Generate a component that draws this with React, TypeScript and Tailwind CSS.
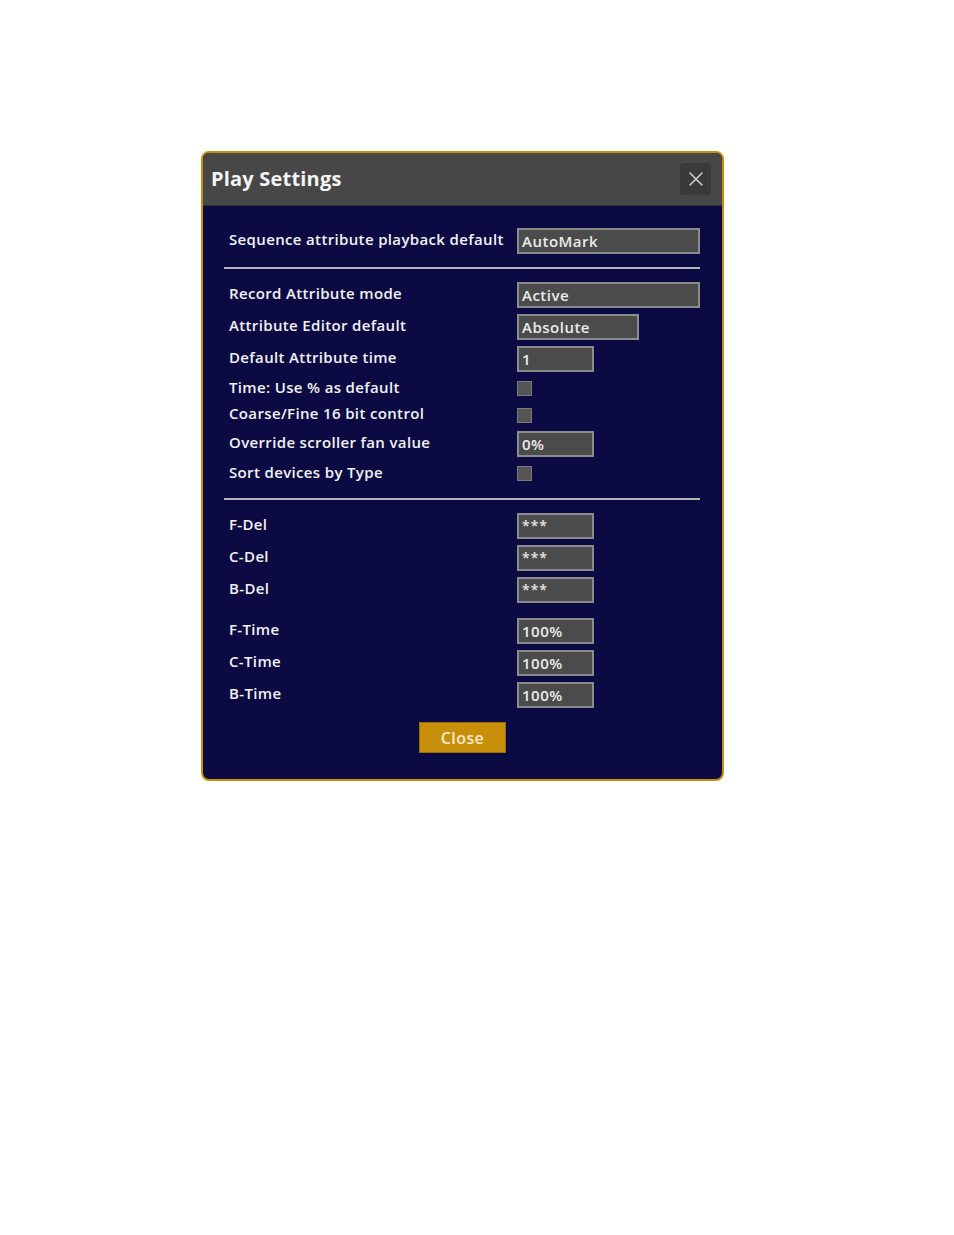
const label = "text-[15px] font-semibold tracking-[0.35px] text-[#f2f2f2]";
const fieldText = "text-[15px] font-semibold tracking-[0.5px] text-[#ececec]";

function Field({ value, width, stars }: { value: string; width: string; stars?: boolean }) {
  return (
    <div
      className={`h-[26px] ${width} border-2 border-[#8c8c8c] bg-[#4b4b4b] flex px-[3px] ${stars ? "items-start pt-[4px]" : "items-center"}`}
    >
      <span className={stars ? "text-[14px] font-bold tracking-[1px] text-[#d8d8d8] leading-none" : fieldText}>{value}</span>
    </div>
  );
}

function Check() {
  return <div className="w-[15px] h-[15px] border border-[#7a7a7a] bg-[#555555]" />;
}

function Row({ text, h, children }: { text: string; h: string; children: React.ReactNode }) {
  return (
    <div className={`flex items-center ${h}`}>
      <div className={`w-[288px] ${label} -mt-[3px]`}>{text}</div>
      {children}
    </div>
  );
}

export default function App() {
  return (
    <div className="min-h-[1235px] bg-white pt-[151px] pl-[201px]" style={{ fontFamily: '"Open Sans", "DejaVu Sans", sans-serif' }}>
      <div className="w-[523px] rounded-[8px] border-2 border-[#c8900a] overflow-hidden bg-[#0b0a42]">
        <div className="h-[53px] bg-[#474747] border-b border-[#333] flex items-center justify-between pl-[8px] pr-[11px]">
          <h1 className="text-[20px] font-bold text-[#f4f4f4] tracking-[0.2px] -mt-[1px]">Play Settings</h1>
          <button className="w-[31px] h-[32px] rounded-[4px] bg-[#3a3a3a] flex items-center justify-center">
            <svg width="16" height="16" viewBox="0 0 16 16" stroke="#d0d0d0" strokeWidth="1.5" strokeLinecap="round">
              <path d="M2 2 L14 14 M14 2 L2 14" />
            </svg>
          </button>
        </div>

        <div className="pl-[26px] pr-[22px] pt-[19px] pb-[26px]">
          <Row text="Sequence attribute playback default" h="h-[32px]">
            <Field value="AutoMark" width="w-[183px]" />
          </Row>

          <div className="h-[2px] bg-[#b4b4bc] ml-[-5px] mt-[10px] mb-[10px]" />

          <Row text="Record Attribute mode" h="h-[32px]">
            <Field value="Active" width="w-[183px]" />
          </Row>
          <Row text="Attribute Editor default" h="h-[32px]">
            <Field value="Absolute" width="w-[122px]" />
          </Row>
          <Row text="Default Attribute time" h="h-[32px]">
            <Field value="1" width="w-[77px]" />
          </Row>
          <Row text="Time: Use % as default" h="h-[27px]">
            <Check />
          </Row>
          <Row text="Coarse/Fine 16 bit control" h="h-[26px]">
            <Check />
          </Row>
          <Row text="Override scroller fan value" h="h-[32px]">
            <Field value="0%" width="w-[77px]" />
          </Row>
          <Row text="Sort devices by Type" h="h-[27px]">
            <Check />
          </Row>

          <div className="h-[2px] bg-[#b4b4bc] ml-[-5px] mt-[11px] mb-[10px]" />

          <Row text="F-Del" h="h-[32px]">
            <Field value="***" width="w-[77px]" stars />
          </Row>
          <Row text="C-Del" h="h-[32px]">
            <Field value="***" width="w-[77px]" stars />
          </Row>
          <Row text="B-Del" h="h-[32px]">
            <Field value="***" width="w-[77px]" stars />
          </Row>

          <div className="h-[9px]" />

          <Row text="F-Time" h="h-[32px]">
            <Field value="100%" width="w-[77px]" />
          </Row>
          <Row text="C-Time" h="h-[32px]">
            <Field value="100%" width="w-[77px]" />
          </Row>
          <Row text="B-Time" h="h-[32px]">
            <Field value="100%" width="w-[77px]" />
          </Row>

          <div className="flex justify-center mt-[11px] pr-[4px]">
            <button className="w-[87px] h-[31px] bg-[#c8900a] border border-[#9a6e08] text-[16px] font-semibold text-[#f6ead0] tracking-[0.4px]">
              Close
            </button>
          </div>
        </div>
      </div>
    </div>
  );
}
